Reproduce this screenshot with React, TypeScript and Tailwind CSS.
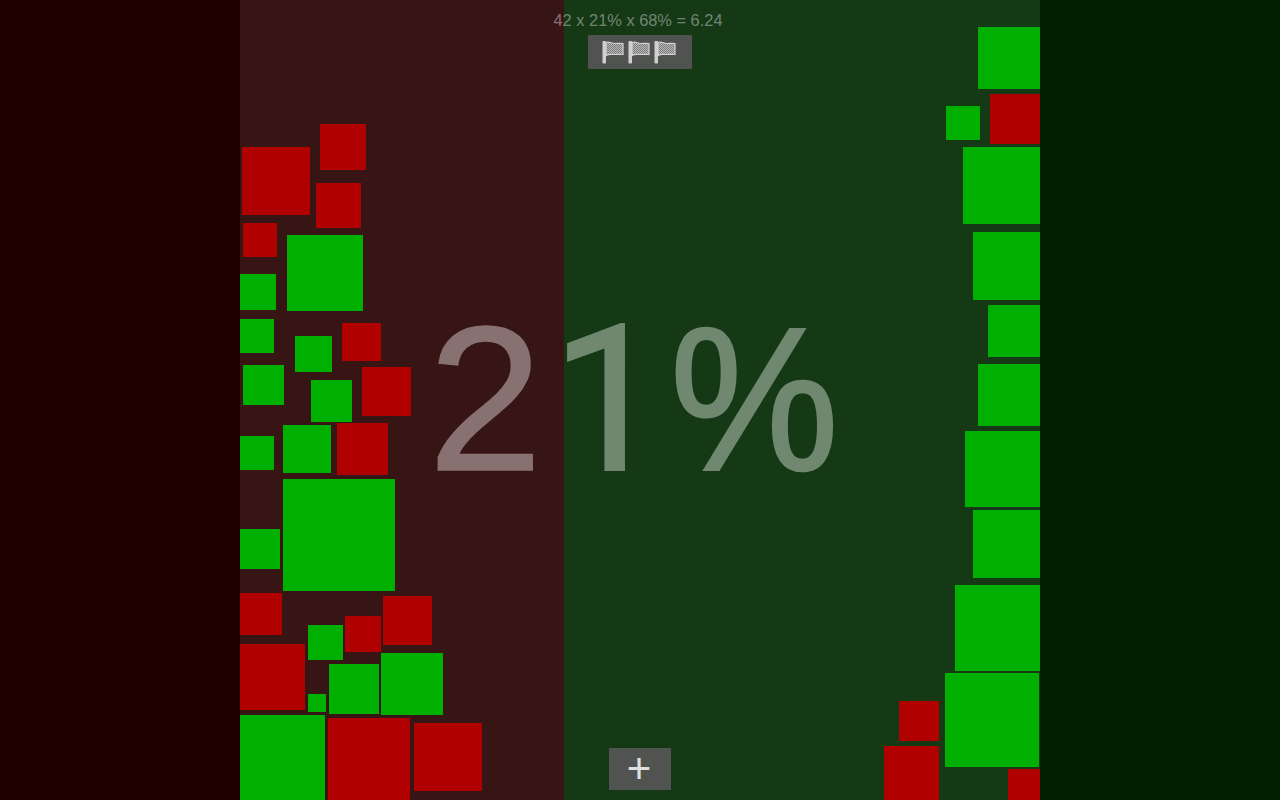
import React from "react";

const RED = "bg-[#b00000]";
const GREEN = "bg-[#00b000]";

// squares sit on a free canvas, offsets are relative to the center panel (x - 240)
const squares: string[] = [
  `${RED} left-[2px] top-[147px] w-[68px] h-[68px]`,
  `${RED} left-[80px] top-[124px] w-[46px] h-[46px]`,
  `${RED} left-[76px] top-[183px] w-[45px] h-[45px]`,
  `${RED} left-[3px] top-[223px] w-[34px] h-[34px]`,
  `${GREEN} left-[47px] top-[235px] w-[76px] h-[76px]`,
  `${GREEN} left-[0px] top-[274px] w-[36px] h-[36px]`,
  `${GREEN} left-[0px] top-[319px] w-[34px] h-[34px]`,
  `${GREEN} left-[55px] top-[336px] w-[37px] h-[36px]`,
  `${RED} left-[102px] top-[323px] w-[39px] h-[38px]`,
  `${GREEN} left-[3px] top-[365px] w-[41px] h-[40px]`,
  `${GREEN} left-[71px] top-[380px] w-[41px] h-[42px]`,
  `${RED} left-[122px] top-[367px] w-[49px] h-[49px]`,
  `${GREEN} left-[0px] top-[436px] w-[34px] h-[34px]`,
  `${GREEN} left-[43px] top-[425px] w-[48px] h-[48px]`,
  `${RED} left-[97px] top-[423px] w-[51px] h-[52px]`,
  `${GREEN} left-[43px] top-[479px] w-[112px] h-[112px]`,
  `${GREEN} left-[0px] top-[529px] w-[40px] h-[40px]`,
  `${RED} left-[0px] top-[593px] w-[42px] h-[42px]`,
  `${RED} left-[143px] top-[596px] w-[49px] h-[49px]`,
  `${RED} left-[105px] top-[616px] w-[36px] h-[36px]`,
  `${GREEN} left-[68px] top-[625px] w-[35px] h-[35px]`,
  `${RED} left-[0px] top-[644px] w-[65px] h-[66px]`,
  `${GREEN} left-[89px] top-[664px] w-[50px] h-[50px]`,
  `${GREEN} left-[141px] top-[653px] w-[62px] h-[62px]`,
  `${GREEN} left-[68px] top-[694px] w-[18px] h-[18px]`,
  `${GREEN} left-[0px] top-[715px] w-[85px] h-[85px]`,
  `${RED} left-[88px] top-[718px] w-[82px] h-[82px]`,
  `${RED} left-[174px] top-[723px] w-[68px] h-[68px]`,
  `${GREEN} left-[738px] top-[27px] w-[62px] h-[62px]`,
  `${RED} left-[750px] top-[94px] w-[50px] h-[50px]`,
  `${GREEN} left-[706px] top-[106px] w-[34px] h-[34px]`,
  `${GREEN} left-[723px] top-[147px] w-[77px] h-[77px]`,
  `${GREEN} left-[733px] top-[232px] w-[67px] h-[68px]`,
  `${GREEN} left-[748px] top-[305px] w-[52px] h-[52px]`,
  `${GREEN} left-[738px] top-[364px] w-[62px] h-[62px]`,
  `${GREEN} left-[725px] top-[431px] w-[75px] h-[76px]`,
  `${GREEN} left-[733px] top-[510px] w-[67px] h-[68px]`,
  `${GREEN} left-[715px] top-[585px] w-[85px] h-[86px]`,
  `${GREEN} left-[705px] top-[673px] w-[94px] h-[94px]`,
  `${RED} left-[659px] top-[701px] w-[40px] h-[40px]`,
  `${RED} left-[644px] top-[746px] w-[55px] h-[54px]`,
  `${RED} left-[768px] top-[769px] w-[32px] h-[31px]`,
];

function CheckerFlag() {
  return (
    <svg width="22" height="24" viewBox="0 0 22 24" className="block">
      <defs>
        <pattern id="checks" width="2" height="2" patternUnits="userSpaceOnUse">
          <rect width="2" height="2" fill="#b8b8b8" />
          <rect width="1" height="1" fill="#7a7a7a" />
          <rect x="1" y="1" width="1" height="1" fill="#7a7a7a" />
        </pattern>
      </defs>
      <rect x="0.500" y="1" width="3.500" height="22.500" rx="1" fill="#cfcfcf" />
      <path
        d="M4 2.500C7 1 9.500 3.500 13 3.500C16 3.500 18 3 21 3.500L21 14.500C18 14 15.500 14.500 12.500 14.500C9 14.500 7 13.500 4 15.500Z"
        fill="url(#checks)"
        stroke="#d2d2d2"
        strokeWidth="1.200"
      />
    </svg>
  );
}

export default function App() {
  return (
    <div className="flex h-[800px] w-[1280px] overflow-hidden font-['Liberation_Sans',Arial,sans-serif]">
      <div className="w-[240px] bg-[#200000]" />

      <div className="relative flex w-[800px] overflow-hidden">
        <div className="w-[324px] bg-[#381515]" />
        <div className="flex-1 bg-[#153815]" />

        {squares.map((s, i) => (
          <div key={i} className={`absolute ${s}`} />
        ))}

        <div className="absolute left-[188px] top-[295px] flex items-baseline text-[206px] leading-[208px]">
          <span className="w-[123px] text-[#887171] [-webkit-text-stroke:1.500px_#887171]">2</span>
          <span className="w-[119px] font-['Roboto',sans-serif] text-[205px] text-[#6f886f] [-webkit-text-stroke:2px_#6f886f]">1</span>
          <span className="origin-left scale-x-[0.93] text-[204px] text-[#6f886f] [-webkit-text-stroke:2.500px_#6f886f]">%</span>
        </div>

        <div className="absolute left-0 right-0 top-[11px] flex flex-col items-center">
          <div className="mr-[4px] h-[18px] text-[16.400px] leading-[18px] text-white/40">
            42 x 21% x 68% = 6.24
          </div>
          <div className="mt-[6px] flex h-[34px] w-[104px] items-center justify-center gap-[4px] bg-[#505350] pr-[2px]">
            <CheckerFlag />
            <CheckerFlag />
            <CheckerFlag />
          </div>
        </div>

        <div className="absolute bottom-[10px] left-[369px] flex h-[42px] w-[62px] items-center justify-center bg-[#505350] pr-[2px] text-[42px] leading-[42px] text-[#e0e0e0]">
          +
        </div>
      </div>

      <div className="w-[240px] bg-[#002000]" />
    </div>
  );
}
